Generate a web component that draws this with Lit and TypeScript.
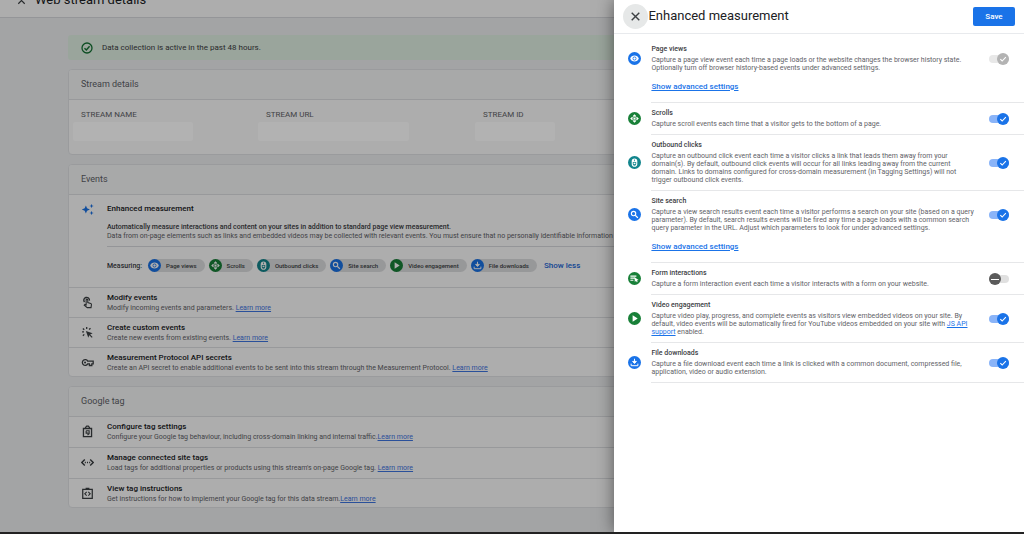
import { LitElement, html, svg, css, nothing } from "lit";
import { customElement, property, state } from "lit/decorators.js";

const glyphs: Record<string, unknown> = {
  close: svg`<path d="M5 5L19 19M19 5L5 19" fill="none" stroke="currentColor" stroke-width="2.600"/>`,
  check: svg`<path d="M4 12.5L9.500 18L20.500 6.500" fill="none" stroke="currentColor" stroke-width="3.200"/>`,
  verified: svg`<circle cx="12" cy="12" r="10" fill="none" stroke="currentColor" stroke-width="2.6"/><path d="M7 12.3L10.7 16L17.2 8.6" fill="none" stroke="currentColor" stroke-width="2.8"/>`,
  eye: svg`<path fill-rule="evenodd" d="M12 4C6.500 4 2 7.300 0.500 12c1.500 4.700 6 8 11.500 8s10-3.300 11.500-8C22 7.300 17.500 4 12 4zM12 17.200a5.200 5.200 0 1 1 0-10.400 5.200 5.200 0 0 1 0 10.400z" fill="currentColor"/><circle cx="12" cy="12" r="3.200" fill="currentColor"/>`,
  scroll: svg`<path d="M12 0.500L7 6h10zM12 23.500l-5-5.500h10zM0.500 12l5.500-5v10zM23.500 12l-5.500-5v10z" fill="currentColor"/><path d="M12 5L19 12 12 19 5 12z" fill="none" stroke="currentColor" stroke-width="2.400"/><circle cx="12" cy="12" r="3" fill="currentColor"/>`,
  mouse: svg`<path fill-rule="evenodd" d="M4.500 8.500a7.500 7.500 0 0 1 15 0v7.500a7.500 7.500 0 0 1-15 0zM7.500 10.500v5.500a4.500 4.500 0 0 0 9 0v-5.500zM11 4v4.500h2V4z" fill="currentColor"/><path d="M9.500 12.500h5v4h-5z" fill="currentColor"/>`,
  search: svg`<circle cx="9.500" cy="9.500" r="5.800" fill="none" stroke="currentColor" stroke-width="3"/><path d="M14 14L21 21" stroke="currentColor" stroke-width="3.400"/>`,
  play: svg`<path d="M7 3.500v17L20.500 12z" fill="currentColor"/>`,
  download: svg`<path d="M12 2v9M7 9l5 5.500L17 9z" fill="currentColor" stroke="currentColor" stroke-width="2.600"/><path d="M3 15v5.500h18V15" fill="none" stroke="currentColor" stroke-width="2.600"/>`,
  form: svg`<path d="M1 5.500h16M1 11h13M1 16.500h8" stroke="currentColor" stroke-width="3"/><path d="M12 8.500l11 7.500-4.500 1 2 4-2.400 1.200-2.200-4-3 3z" fill="currentColor"/>`,
  sparkle: svg`<path d="M9 4.500l2.200 5.300L16.500 12l-5.300 2.200L9 19.500l-2.200-5.300L1.500 12l5.300-2.200zM19.500 1.500l1.100 2.900 2.900 1.100-2.900 1.100-1.100 2.900-1.100-2.900-2.900-1.100 2.900-1.100zM19.500 14.500l1.100 2.900 2.900 1.100-2.900 1.100-1.100 2.900-1.100-2.900-2.900-1.100 2.900-1.100z" fill="currentColor"/>`,
  touch: svg`<path d="M6.500 11.200A5.200 5.200 0 1 1 15.500 8.500" fill="none" stroke="currentColor" stroke-width="2.600"/><path d="M9.500 16.500V7.200a1.500 1.500 0 0 1 3 0V12l5.500 1.800c1 .4 1.500 1.200 1.300 2.200L18.500 21.500h-7L6 16.800l1.200-1.200z" fill="none" stroke="currentColor" stroke-width="2"/>`,
  cursor: svg`<path d="M9 9l12.500 4.600-4.700 1.900 4.600 4.600-1.500 1.500-4.600-4.600-1.800 4.500z" fill="currentColor"/><path d="M2 11h3.500M3.500 4.500L6 7M10.500 2v3.500M17.500 4L15 6.500M3.500 18L6 15.500" stroke="currentColor" stroke-width="2.400"/>`,
  key: svg`<path fill="none" stroke="currentColor" stroke-width="2.400" d="M12.300 9.500H22.500v5h-2.500v3h-4.500v-3h-3.200a5.200 5.200 0 1 1 0-5z"/><circle cx="7.500" cy="12" r="1.900" fill="currentColor"/>`,
  tag: svg`<path d="M4.500 6.500h15v15h-15z" fill="none" stroke="currentColor" stroke-width="2.400"/><path d="M8.500 6V4.500l2-2.500h3l2 2.500V6" fill="none" stroke="currentColor" stroke-width="2.400"/><path d="M9.500 10.500h5.500v5.500l-3 2.500M9.500 10.500V15h4" fill="none" stroke="currentColor" stroke-width="2"/>`,
  code: svg`<path d="M7 6.500L1.500 12 7 17.500M17 6.500l5.500 5.500-5.500 5.500" fill="none" stroke="currentColor" stroke-width="2.600"/><path d="M7 12h2M11 12h2M15 12h2" stroke="currentColor" stroke-width="2.400"/>`,
  snippet: svg`<path d="M3.200 4.500h17.600v16.300H3.200z" fill="none" stroke="currentColor" stroke-width="2.300"/><path d="M8.500 1.500h7v3.500h-7z" fill="currentColor"/><path d="M10.500 9L7 12.500l3.500 3.500M13.500 9l3.500 3.500-3.500 3.500" fill="none" stroke="currentColor" stroke-width="2"/>`,
};

const glyph = (name: string) =>
  html`<svg class="glyph" viewBox="0 0 24 24" aria-hidden="true">${glyphs[name]}</svg>`;

type Measure = {
  id: string;
  icon: string;
  tone: string;
  title: string;
  text: unknown;
  advanced?: boolean;
  on: boolean;
  locked?: boolean;
};

const measures: Measure[] = [
  {
    id: "views", icon: "eye", tone: "blue", title: "Page views", on: true, locked: true, advanced: true,
    text: "Capture a page view event each time a page loads or the website changes the browser history state. Optionally turn off browser history-based events under advanced settings.",
  },
  {
    id: "scrolls", icon: "scroll", tone: "green", title: "Scrolls", on: true,
    text: "Capture scroll events each time that a visitor gets to the bottom of a page.",
  },
  {
    id: "outbound", icon: "mouse", tone: "teal", title: "Outbound clicks", on: true,
    text: "Capture an outbound click event each time a visitor clicks a link that leads them away from your domain(s). By default, outbound click events will occur for all links leading away from the current domain. Links to domains configured for cross-domain measurement (in Tagging Settings) will not trigger outbound click events.",
  },
  {
    id: "search", icon: "search", tone: "blue", title: "Site search", on: true, advanced: true,
    text: "Capture a view search results event each time a visitor performs a search on your site (based on a query parameter). By default, search results events will be fired any time a page loads with a common search query parameter in the URL. Adjust which parameters to look for under advanced settings.",
  },
  {
    id: "form", icon: "form", tone: "green", title: "Form interactions", on: false,
    text: "Capture a form interaction event each time a visitor interacts with a form on your website.",
  },
  {
    id: "video", icon: "play", tone: "green", title: "Video engagement", on: true,
    text: html`Capture video play, progress, and complete events as visitors view embedded videos on your site. By default, video events will be automatically fired for YouTube videos embedded on your site with <a href="#">JS API support</a> enabled.`,
  },
  {
    id: "files", icon: "download", tone: "blue", title: "File downloads", on: true,
    text: "Capture a file download event each time a link is clicked with a common document, compressed file, application, video or audio extension.",
  },
];

const eventRows = [
  { icon: "touch", title: "Modify events", text: "Modify incoming events and parameters. " },
  { icon: "cursor", title: "Create custom events", text: "Create new events from existing events. " },
  { icon: "key", title: "Measurement Protocol API secrets", text: "Create an API secret to enable additional events to be sent into this stream through the Measurement Protocol. " },
];

const tagRows = [
  { icon: "tag", title: "Configure tag settings", text: "Configure your Google tag behaviour, including cross-domain linking and internal traffic." },
  { icon: "code", title: "Manage connected site tags", text: "Load tags for additional properties or products using this stream's on-page Google tag. " },
  { icon: "snippet", title: "View tag instructions", text: "Get instructions for how to implement your Google tag for this data stream." },
];

const shared = css`
  * { box-sizing: border-box; }
  h1, h2, h3, p { margin: 0; font-weight: 400; }
  button { font: inherit; border: 0; padding: 0; background: none; color: inherit; cursor: pointer; }
  a { color: #1a73e8; }
  .glyph { display: block; width: 100%; height: 100%; }
  .badge {
    display: block;
    flex: none;
    width: 13px;
    height: 13px;
    padding: 2px;
    border-radius: 50%;
    color: #fff;
  }
  .blue { background: #1a73e8; }
  .green { background: #188038; }
  .teal { background: #12858d; }
`;

@customElement("measure-switch")
export class MeasureSwitch extends LitElement {
  @property({ type: Boolean }) on = false;
  @property({ type: Boolean }) locked = false;
  @property() name = "";

  static styles = [
    shared,
    css`
      :host { display: block; }
      .switch { position: relative; display: flex; align-items: center; width: 20px; height: 12px; }
      .box {
        appearance: none;
        width: 100%;
        height: 8px;
        margin: 0;
        border-radius: 4px;
        background: #e0e0e0;
      }
      .box:checked { background: #8ab4f8; }
      .box:disabled { background: #e8e8e8; }
      .thumb {
        position: absolute;
        left: 0;
        top: 0;
        width: 12px;
        height: 12px;
        padding: 2px;
        border-radius: 50%;
        background: #5a5a5a;
        color: #fff;
        pointer-events: none;
      }
      .box:checked + .thumb { left: auto; right: 0; background: #1a73e8; }
      .box:disabled + .thumb { background: #b3b3b3; }
      .dash { display: block; height: 1px; margin-top: 4px; background: #fff; }
    `,
  ];

  render() {
    return html`<label class="switch">
      <input
        class="box"
        type="checkbox"
        role="switch"
        aria-label=${this.name}
        .checked=${this.on}
        ?disabled=${this.locked}
        @change=${(e: Event) => (this.on = (e.target as HTMLInputElement).checked)}
      />
      <span class="thumb">${this.on ? glyph("check") : html`<span class="dash"></span>`}</span>
    </label>`;
  }
}

@customElement("measurement-drawer")
export class MeasurementDrawer extends LitElement {
  static styles = [
    shared,
    css`
      :host { display: block; background: #fff; color: #3c4043; box-shadow: 0 0 16px rgba(0, 0, 0, 0.5); }
      .bar {
        display: flex;
        align-items: center;
        height: 34px;
        padding: 0 9px 1px 9px;
        border-bottom: 1px solid #e8eaed;
      }
      .close { width: 25px; height: 25px; padding: 6px; border-radius: 50%; background: #e6e8e8; color: #3c4043; }
      .heading { flex: 1; font-size: 13px; line-height: 16px; color: #202124; }
      .save {
        width: 42px;
        height: 19px;
        border-radius: 2px;
        background: #1a73e8;
        color: #fff;
        font-size: 8px;
        font-weight: 500;
      }
      .list { padding: 5px 0 0 14px; }
      .item { display: grid; grid-template-columns: 13px minmax(0, 1fr); column-gap: 10px; }
      .badge { align-self: center; }
      .body {
        grid-column: 2;
        display: grid;
        grid-template-columns: minmax(0, 1fr) 20px;
        align-items: center;
        column-gap: 13px;
        padding: 6px 15px 6px 0;
      }
      .rest { grid-column: 2; height: 24px; padding-top: 4px; font-size: 8px; line-height: 10px; font-weight: 500; }
      .line { grid-column: 2; height: 1px; background: #e6e7e9; }
      .title { margin-bottom: 3px; font-size: 7px; line-height: 8px; font-weight: 500; }
      .text { font-size: 7px; line-height: 8px; color: #5f6368; }
    `,
  ];

  render() {
    return html`
      <header class="bar">
        <button class="close" aria-label="Close">${glyph("close")}</button>
        <h2 class="heading">Enhanced measurement</h2>
        <button class="save">Save</button>
      </header>
      <div class="list">
        ${measures.map(
          (m) => html`<section class="item">
            <span class="badge ${m.tone}">${glyph(m.icon)}</span>
            <div class="body">
              <div>
                <h3 class="title">${m.title}</h3>
                <p class="text">${m.text}</p>
              </div>
              <measure-switch .name=${m.title} .on=${m.on} .locked=${!!m.locked}></measure-switch>
            </div>
            ${m.advanced ? html`<div class="rest"><a href="#">Show advanced settings</a></div>` : nothing}
            <div class="line"></div>
          </section>`
        )}
      </div>
    `;
  }
}

@customElement("app-root")
export class AppRoot extends LitElement {
  @state() private expanded = true;

  static styles = [
    shared,
    css`
      :host {
        position: relative;
        display: block;
        box-sizing: border-box;
        height: 100vh;
        overflow: hidden;
        background: #f0f2f4;
        color: #3c4043;
        font-family: Roboto, sans-serif;
        border-bottom: 2px solid #222;
      }
      .top {
        display: flex;
        align-items: center;
        gap: 8px;
        height: 35px;
        margin-top: -17px;
        padding-left: 16px;
        background: #fff;
        border-bottom: 1px solid #dadce0;
      }
      .back { width: 11px; height: 11px; }
      .name { font-size: 13px; line-height: 16px; color: #202124; }
      .main { display: flex; flex-direction: column; gap: 9px; padding: 17px 68px; white-space: nowrap; }
      .notice {
        display: flex;
        align-items: center;
        gap: 9px;
        height: 25px;
        padding-left: 13px;
        border-radius: 3px;
        background: #e4f3e6;
        font-size: 8px;
      }
      .ok { width: 12px; height: 12px; color: #137333; }
      .card { border: 1px solid #e3e5e8; border-radius: 4px; background: #fff; overflow: hidden; }
      .head {
        padding: 0 12px;
        font-size: 9px;
        line-height: 29px;
        color: #5f6368;
        background: #f8f9fa;
        border-bottom: 1px solid #e0e2e5;
      }
      .facts { display: grid; grid-template-columns: 185fr 217fr 460fr; padding: 9px 12px 13px; }
      .label { font-size: 8px; line-height: 12px; color: #5f6368; }
      .value {
        position: relative;
        z-index: 2;
        height: 19px;
        margin: 1px 0 0 -8px;
        border-radius: 2px;
        background: #b2b2b2;
      }
      .v1 { width: 120px; }
      .v2 { width: 151px; }
      .v3 { width: 80px; }
      .row { display: flex; gap: 13px; height: 30px; padding: 0 12px; border-bottom: 1px solid #e0e2e5; }
      .tags .row { height: 31px; }
      .card .row:last-child { height: 28px; border-bottom: 0; }
      .lead { flex: none; width: 13px; height: 13px; margin-top: 8px; color: #3c4043; }
      .name2 { margin: 4px 0 1px; font-size: 8px; line-height: 11px; font-weight: 500; color: #202124; }
      .desc { font-size: 7px; line-height: 9px; color: #5f6368; }
      .main a { color: #3f76e4; }
      .tall { height: 93px; }
      .spark { color: #1a73e8; }
      .grow { flex: 1; min-width: 0; }
      .tall .name2 { margin: 8px 0 9px; }
      .strong { font-size: 7px; line-height: 9px; font-weight: 500; }
      .chips {
        display: flex;
        align-items: center;
        gap: 4px;
        margin-top: 5px;
        padding-top: 12px;
        border-top: 1px solid #dadce0;
        font-size: 7px;
        font-weight: 500;
      }
      .measuring { margin-right: 2px; }
      .chip {
        display: flex;
        align-items: center;
        gap: 5px;
        height: 13px;
        padding-right: 8px;
        border-radius: 7px;
        background: #dfe0e2;
        font-size: 6px;
      }
      .lessmore { margin-left: 3px; font-size: 8px; font-weight: 500; color: #1a67d8; }
      .scrim { position: absolute; inset: 0; z-index: 1; background: rgba(0, 0, 0, 0.32); }
      .drawer { position: absolute; z-index: 3; top: 0; right: 0; bottom: 0; width: 40%; }
    `,
  ];

  private rows(list: { icon: string; title: string; text: string }[]) {
    return list.map(
      (r) => html`<div class="row">
        <span class="lead">${glyph(r.icon)}</span>
        <div class="grow">
          <h3 class="name2">${r.title}</h3>
          <p class="desc">${r.text}<a href="#">Learn more</a></p>
        </div>
      </div>`
    );
  }

  render() {
    return html`
      <header class="top">
        <button class="back" aria-label="Back">${glyph("close")}</button>
        <h1 class="name">Web stream details</h1>
      </header>
      <main class="main">
        <div class="notice"><span class="ok">${glyph("verified")}</span>Data collection is active in the past 48 hours.</div>
        <section class="card">
          <h2 class="head">Stream details</h2>
          <div class="facts">
            <div><div class="label">STREAM NAME</div><div class="value v1"></div></div>
            <div><div class="label">STREAM URL</div><div class="value v2"></div></div>
            <div><div class="label">STREAM ID</div><div class="value v3"></div></div>
          </div>
        </section>
        <section class="card">
          <h2 class="head">Events</h2>
          <div class="row tall">
            <span class="lead spark">${glyph("sparkle")}</span>
            <div class="grow">
              <h3 class="name2">Enhanced measurement</h3>
              <p class="strong">Automatically measure interactions and content on your sites in addition to standard page view measurement.</p>
              <p class="desc">Data from on-page elements such as links and embedded videos may be collected with relevant events. You must ensure that no personally identifiable information will be collected.</p>
              <div class="chips">
                <span class="measuring">Measuring:</span>
                ${this.expanded
                  ? measures
                      .filter((m) => m.on)
                      .map((m) => html`<span class="chip"><span class="badge ${m.tone}">${glyph(m.icon)}</span>${m.title}</span>`)
                  : nothing}
                <button class="lessmore" @click=${() => (this.expanded = !this.expanded)}>
                  ${this.expanded ? "Show less" : "Show more"}
                </button>
              </div>
            </div>
          </div>
          ${this.rows(eventRows)}
        </section>
        <section class="card tags">
          <h2 class="head">Google tag</h2>
          ${this.rows(tagRows)}
        </section>
      </main>
      <div class="scrim"></div>
      <measurement-drawer class="drawer"></measurement-drawer>
    `;
  }
}
